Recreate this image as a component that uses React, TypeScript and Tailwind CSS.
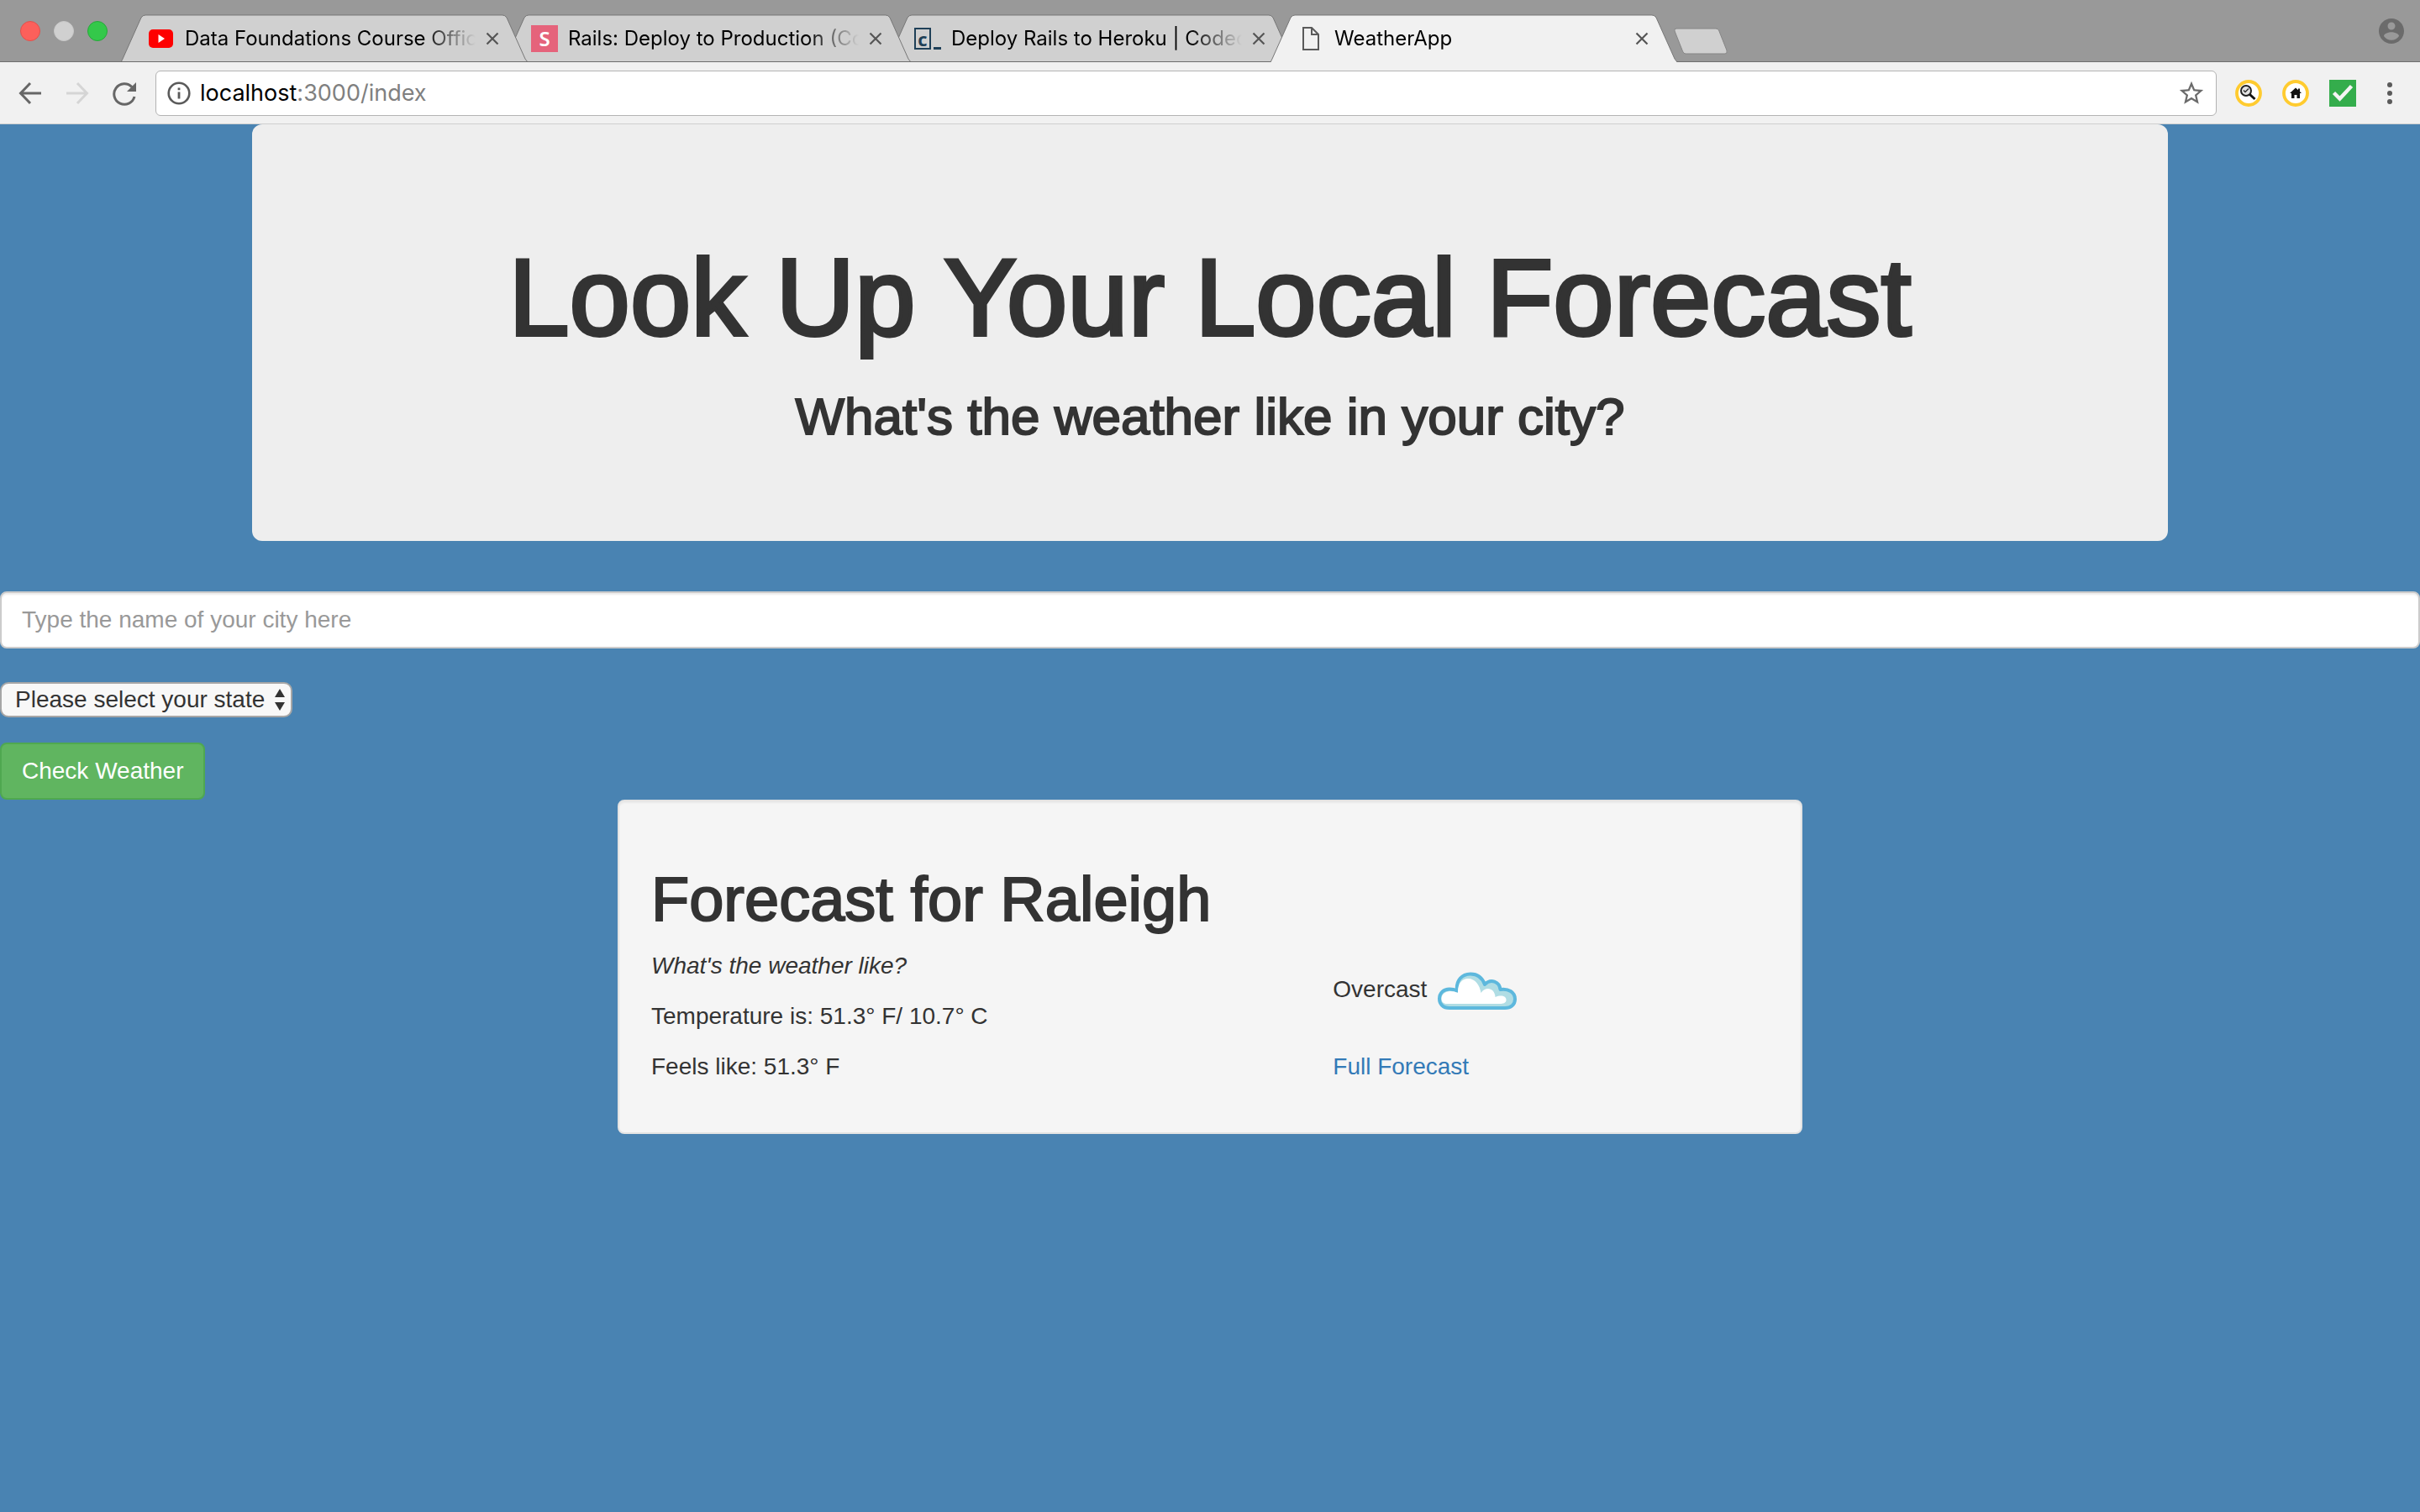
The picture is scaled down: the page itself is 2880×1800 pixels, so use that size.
import React from "react";

type TabInfo = { title: string; icon: React.ReactNode; active?: boolean; layer: string };

const YouTubeIcon = () => (
  <svg viewBox="0 0 32 32" className="size-8">
    <rect x="1" y="5" width="29" height="22" rx="5" fill="#fe0000" />
    <path d="M12.500 11v10l7.500-5z" fill="#fff" />
  </svg>
);

const SkillIcon = () => (
  <span className="flex size-8 items-center justify-center bg-[#e5637b] font-['Noto_Sans',sans-serif] text-2xl leading-8 font-semibold text-white">S</span>
);

const CodecademyIcon = () => (
  <span className="flex size-8 items-center gap-[3px] text-[#1f4058]">
    <span className="flex h-[26px] w-5 items-center justify-center border-2 border-[#1f4058] font-['Open_Sans',sans-serif] text-[22px] leading-5 font-bold">c</span>
    <span className="mb-[3px] h-[3px] w-[9px] self-end bg-[#1f4058]" />
  </span>
);

const PageIcon = () => (
  <svg viewBox="0 0 32 32" className="size-8" fill="none" stroke="#5a5a5a" strokeWidth="2">
    <path d="M7 3h10l8 8v18H7z" />
    <path d="M17 3v8h8" />
  </svg>
);

const tabs: TabInfo[] = [
  { title: "Data Foundations Course Office Hours", icon: <YouTubeIcon />, layer: "z-30" },
  { title: "Rails: Deploy to Production (Code School)", icon: <SkillIcon />, layer: "z-20" },
  { title: "Deploy Rails to Heroku | Codecademy", icon: <CodecademyIcon />, layer: "z-10" },
  { title: "WeatherApp", icon: <PageIcon />, active: true, layer: "z-40" },
];

function Tab({ title, icon, active, layer }: TabInfo) {
  return (
    <div className={`relative -mr-7 h-[57px] w-[484px] ${layer}`}>
      <svg viewBox="0 0 484 58" preserveAspectRatio="none" className="absolute inset-0 h-full w-full">
        <path d="M0 58L2 54L24 4Q26 1 29 1H454Q457 1 459 4L481 54L484 58Z" fill={active ? "#f1f1f1" : "#d0d0d0"} />
        <path d="M0 58L2 54L24 4Q26 1 29 1H454Q457 1 459 4L481 54L484 58" fill="none" stroke="#757575" strokeWidth="1" />
        {!active && <path d="M0 57.500H484" stroke="#6a6a6a" strokeWidth="1" />}
      </svg>
      <div className="relative flex h-full items-center pr-7 pl-8">
        {icon}
        <span className="ml-3 w-[346px] overflow-hidden text-2xl whitespace-nowrap text-black [mask-image:linear-gradient(to_right,#000_82%,transparent)]">
          {title}
        </span>
        <button aria-label={`Close ${title}`} className="ml-2.5 flex size-5 items-center justify-center">
          <svg viewBox="0 0 16 16" className="size-4 shrink-0" stroke="#555" strokeWidth="2.200">
            <path d="M1.500 1.500l13 13M14.500 1.500l-13 13" />
          </svg>
        </button>
      </div>
    </div>
  );
}

function TabStrip() {
  return (
    <div className="flex h-[74px] items-end border-b border-[#6f6f6f] bg-[#999]">
      <div className="flex h-full items-center gap-4 pr-4 pl-6">
        <button aria-label="Close window" className="size-6 rounded-full border border-[#e2504b] bg-[#fc605b]" />
        <button aria-label="Minimize window" className="size-6 rounded-full border border-[#c8c8c8] bg-[#d0d0d0]" />
        <button aria-label="Zoom window" className="size-6 rounded-full border border-[#27a83a] bg-[#34c84a]" />
      </div>
      <div className="-mb-px flex">
        {tabs.map((t) => (
          <Tab key={t.title} {...t} />
        ))}
      </div>
      <button aria-label="New tab" className="relative z-50 mb-2 ml-6 h-8 w-16">
        <svg viewBox="0 0 64 32" className="h-8 w-16">
          <path d="M3 1H50Q52.500 1 53.500 3L63 27Q64 31 61 31H14Q11.500 31 10.500 28L1 4Q0 1 3 1Z" fill="#d0d0d0" stroke="#858585" />
        </svg>
      </button>
      <button aria-label="Profile" className="mr-4 ml-auto flex h-full items-center">
        <svg viewBox="0 0 24 24" className="size-9" fill="#6b6b6b">
          <path d="M12 2C6.480 2 2 6.480 2 12s4.480 10 10 10 10-4.480 10-10S17.520 2 12 2zm0 3c1.660 0 3 1.340 3 3s-1.340 3-3 3-3-1.340-3-3 1.340-3 3-3zm0 14.200c-2.500 0-4.710-1.280-6-3.220.030-1.990 4-3.080 6-3.080 1.990 0 5.970 1.090 6 3.080-1.290 1.940-3.500 3.220-6 3.220z" />
        </svg>
      </button>
    </div>
  );
}

function Toolbar() {
  return (
    <div className="flex h-[74px] items-center border-b border-[#cfcfcf] bg-[#f1f1f1] px-5">
      <button aria-label="Back" className="size-8">
        <svg viewBox="0 0 32 32" className="size-8" fill="none" stroke="#666" strokeWidth="3">
          <path d="M29 16H5M16 4L4.500 16L16 28" />
        </svg>
      </button>
      <button aria-label="Forward" disabled className="ml-6 size-8">
        <svg viewBox="0 0 32 32" className="size-8" fill="none" stroke="#d5d5d5" strokeWidth="3">
          <path d="M3 16H27M16 4L27.500 16L16 28" />
        </svg>
      </button>
      <button aria-label="Reload" className="ml-6 size-8">
        <svg viewBox="0 0 32 32" className="size-8">
          <path d="M25 8.500A12.300 12.300 0 1 0 28 20" fill="none" stroke="#666" strokeWidth="3" />
          <path d="M30 3V14H19Z" fill="#666" />
        </svg>
      </button>
      <div className="ml-[21px] flex h-[54px] min-w-0 grow items-center rounded-md border border-[#b3b3b3] bg-white px-3">
        <svg viewBox="0 0 30 30" className="size-[30px] shrink-0" fill="none" stroke="#5a5a5a">
          <circle cx="15" cy="15" r="12.300" strokeWidth="2.600" />
          <path d="M15 13.500V21.500M15 8.500V11.300" strokeWidth="2.800" />
        </svg>
        <div className="ml-2.5 grow text-[27px] leading-9 whitespace-nowrap text-[#808080]">
          <span className="text-black">localhost</span>:3000/index
        </div>
        <button aria-label="Bookmark this page" className="size-[34px]">
          <svg viewBox="0 0 24 24" className="size-[34px]" fill="#6b6b6b">
            <path d="M22 9.240l-7.190-.620L12 2 9.190 8.630 2 9.240l5.460 4.730L5.820 21 12 17.270 18.180 21l-1.630-7.030L22 9.240zM12 15.400l-3.760 2.270 1-4.280-3.320-2.880 4.380-.380L12 6.100l1.710 4.040 4.380.380-3.320 2.880 1 4.280L12 15.400z" />
          </svg>
        </button>
      </div>
      <div className="ml-[22px] flex items-center gap-6">
        <button aria-label="Search extension">
          <svg viewBox="0 0 32 32" className="size-8">
            <circle cx="16" cy="16" r="14" fill="#fff" stroke="#ffcb2f" strokeWidth="3.800" />
            <circle cx="13" cy="13" r="6" fill="#e4e4e4" stroke="#222" strokeWidth="2" />
            <path d="M10 12.500l2 2 4-4" fill="none" stroke="#333" strokeWidth="1.500" />
            <path d="M17.500 17.500l6 5.500" stroke="#111" strokeWidth="3" />
          </svg>
        </button>
        <button aria-label="Home extension">
          <svg viewBox="0 0 32 32" className="size-8">
            <circle cx="16" cy="16" r="14" fill="#fff" stroke="#ffcb2f" strokeWidth="3.800" />
            <path d="M16 9.500L9 16H11V22H14.500V18H17.500V22H21V16H23L21 14V10.500H19V12.200Z" fill="#111" />
          </svg>
        </button>
        <button aria-label="Checker extension">
          <svg viewBox="0 0 32 32" className="size-8">
            <rect width="32" height="32" fill="#34ad4c" />
            <path d="M5.500 15.500L12.500 22.500L26.500 7.500" fill="none" stroke="#f4f4f4" strokeWidth="4.400" />
          </svg>
        </button>
        <button aria-label="Menu">
          <svg viewBox="0 0 32 32" className="size-8" fill="#5a5a5a">
            <circle cx="16" cy="6" r="3" />
            <circle cx="16" cy="16" r="3" />
            <circle cx="16" cy="26" r="3" />
          </svg>
        </button>
      </div>
    </div>
  );
}

const Cloud = () => (
  <svg viewBox="0 0 100 100" className="size-[100px]">
    <path
      d="M17 70C9 70 5 65 5 59C5 52 10 47.500 17 47.500Q22 47.500 26 49.500C24.500 37 32 29.500 42 29.500C51 29.500 56.500 35 59 42C66 34.500 76.500 38.500 77.500 48C87 46.500 95 51 95 59.500C95 66 90 70 83 70Z"
      fill="#b0dde4"
      stroke="#5db8dd"
      strokeWidth="4"
      strokeLinejoin="round"
    />
    <path
      d="M14 65C9.500 65 7.500 62.500 7.500 59C7.500 53.500 12 50 18 50Q23 50 27 52C26.500 41 32 35 39 35C48 35 53 43 54.500 52C60 43.500 71 46 71.500 57C79 54 85 56 84.500 61C84 64 81 65 77 65Z"
      fill="#fff"
    />
  </svg>
);

export default function App() {
  return (
    <div className="min-h-screen bg-[#4983b2] font-['Liberation_Sans',Arial,sans-serif] text-[28px] leading-10 text-[#333]">
      <header className="font-[Inter,sans-serif]">
        <TabStrip />
        <Toolbar />
      </header>

      <main>
        <section className="mx-auto w-full max-w-[2280px] rounded-xl bg-[#eee] px-[120px] pt-[136px] pb-[116px] text-center">
          <h1 className="text-[130px] leading-[140px] [-webkit-text-stroke:4px_#333]">Look Up Your Local Forecast</h1>
          <h2 className="mt-10 text-[62px] leading-[64px] [-webkit-text-stroke:2px_#333]">What's the weather like in your city?</h2>
        </section>

        <form className="mt-[60px] flex flex-col items-start" onSubmit={(e) => e.preventDefault()}>
          <input
            type="text"
            aria-label="City"
            placeholder="Type the name of your city here"
            className="h-[68px] w-full rounded-lg border-2 border-[#ccc] bg-white px-6 shadow-[inset_0_2px_2px_rgba(0,0,0,0.075)] placeholder:text-[#999]"
          />
          <div className="relative mt-10 h-[42px]">
            <select
              aria-label="State"
              defaultValue=""
              className="h-[42px] w-[348px] appearance-none rounded-[10px] border-2 border-[#a6a6a6] bg-[#f8f8f8] pl-4 leading-9"
            >
              <option value="">Please select your state</option>
              <option value="NC">North Carolina</option>
            </select>
            <svg viewBox="0 0 14 26" className="pointer-events-none absolute top-2 right-2 h-[26px] w-3.5" fill="#333">
              <path d="M7 0L13 10H1ZM7 26L13 16H1Z" />
            </svg>
          </div>
          <button type="submit" className="mt-[30px] h-[68px] rounded-lg border-2 border-[#4fa850] bg-[#60b560] px-6 text-white">
            Check Weather
          </button>
        </form>

        <section className="mx-auto w-full max-w-[1410px] rounded-lg border-2 border-[#e3e3e3] bg-[#f5f5f5] px-[38px] pt-[78px] pb-[58px] shadow-[inset_0_2px_2px_rgba(0,0,0,0.05)]">
          <h1 className="text-[74px] leading-[78px] [-webkit-text-stroke:2px_#333]">Forecast for Raleigh</h1>
          <div className="mt-5 grid grid-cols-[61%_39%]">
            <div className="flex flex-col gap-5">
              <p className="italic">What's the weather like?</p>
              <p>Temperature is: 51.3° F/ 10.7° C</p>
              <p>Feels like: 51.3° F</p>
            </div>
            <div className="flex flex-col gap-5">
              <div className="flex items-center gap-2.5">
                <span className="pb-1">Overcast</span>
                <Cloud />
              </div>
              <a href="#forecast" className="self-start text-[#337ab7]">Full Forecast</a>
            </div>
          </div>
        </section>
      </main>
    </div>
  );
}
